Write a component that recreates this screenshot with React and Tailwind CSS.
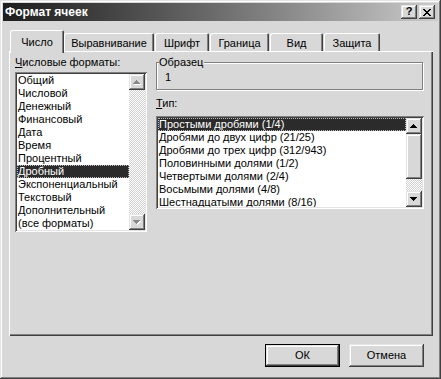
import React from "react";

const BG = "bg-[#d8d8d8]";
const raised =
  "shadow-[inset_-1px_-1px_0_#404040,inset_1px_1px_0_#e4e4e4,inset_-2px_-2px_0_#808080,inset_2px_2px_0_#ffffff]";
const sunken =
  "shadow-[inset_1px_1px_0_#808080,inset_-1px_-1px_0_#ffffff,inset_2px_2px_0_#404040,inset_-2px_-2px_0_#e4e4e4]";
const hatch =
  "bg-[image:repeating-conic-gradient(#ffffff_0%_25%,#d0d0d0_0%_50%)] bg-[length:2px_2px]";

function Arrow({ dir, disabled }) {
  const rows = dir === "up" ? [[3, 0, 1], [2, 1, 3], [1, 2, 5], [0, 3, 7]] : [[0, 0, 7], [1, 1, 5], [2, 2, 3], [3, 3, 1]];
  return (
    <svg width="8" height="5" viewBox="0 0 8 5" shapeRendering="crispEdges">
      {disabled &&
        rows.map(([x, y, w], i) => <rect key={"s" + i} x={x + 1} y={y + 1} width={w} height={1} fill="#ffffff" />)}
      {rows.map(([x, y, w], i) => (
        <rect key={i} x={x} y={y} width={w} height={1} fill={disabled ? "#888888" : "#000000"} />
      ))}
    </svg>
  );
}

function ScrollBtn({ dir, disabled }) {
  return (
    <div className={`w-[16px] h-[16px] shrink-0 ${BG} ${raised} flex items-center justify-center`}>
      <Arrow dir={dir} disabled={disabled} />
    </div>
  );
}

function Row({ text, selected, pl }) {
  return (
    <div
      className={`h-[13px] leading-[13px] whitespace-nowrap ${pl} ${
        selected ? "bg-[#2b2b2b] text-white outline-1 outline-dotted outline-[#bbbbbb] -outline-offset-1" : ""
      }`}
    >
      {text}
    </div>
  );
}

const formats = [
  "Общий",
  "Числовой",
  "Денежный",
  "Финансовый",
  "Дата",
  "Время",
  "Процентный",
  "Дробный",
  "Экспоненциальный",
  "Текстовый",
  "Дополнительный",
  "(все форматы)",
];

const types = [
  "Простыми дробями (1/4)",
  "Дробями до двух цифр (21/25)",
  "Дробями до трех цифр (312/943)",
  "Половинными долями (1/2)",
  "Четвертыми долями (2/4)",
  "Восьмыми долями (4/8)",
  "Шестнадцатыми долями (8/16)",
];

const tabBase =
  "h-[18px] leading-[13px] pt-[4px] text-center rounded-t-[2px] shadow-[inset_1px_1px_0_#ffffff,inset_-1px_0_0_#404040,inset_-2px_0_0_#808080]";

export default function App() {
  return (
    <div
      className={`w-[441px] h-[379px] ${BG} p-[3px] flex flex-col text-[11px] text-black font-['Liberation_Sans',Arial,sans-serif] shadow-[inset_-1px_-1px_0_#404040,inset_1px_1px_0_#e4e4e4,inset_-2px_-2px_0_#808080,inset_2px_2px_0_#ffffff]`}
    >
      {/* Title bar */}
      <div className="h-[18px] shrink-0 flex items-center justify-between pl-[2px] pr-[3px] bg-linear-to-r from-[#1e1e1e] via-[#6e6e6e] to-[#cccccc]">
        <span className="text-white font-bold text-[12px] leading-[14px]">Формат ячеек</span>
        <div className="flex gap-[2px]">
          <div className={`w-[16px] h-[14px] ${BG} ${raised} flex items-center justify-center text-[11px] font-bold leading-none pb-[1px]`}>
            ?
          </div>
          <div className={`w-[16px] h-[14px] ${BG} ${raised} flex items-center justify-center`}>
            <svg width="8" height="7" viewBox="0 0 8 7" shapeRendering="crispEdges">
              <path d="M0 0h2v1H0zM6 0h2v1H6zM1 1h2v1H1zM5 1h2v1H5zM2 2h4v1H2zM3 3h2v1H3zM2 4h4v1H2zM1 5h2v1H1zM5 5h2v1H5zM0 6h2v1H0zM6 6h2v1H6z" fill="#000" />
            </svg>
          </div>
        </div>
      </div>

      {/* Body */}
      <div className="pl-[6px] pt-[9px] flex flex-col">
        {/* Tabs */}
        <div className="flex items-end h-[21px]">
          <div
            className={`relative z-10 ml-[1px] mb-[-2px] w-[54px] h-[23px] ${BG} leading-[13px] pt-[6px] text-center rounded-t-[2px] shadow-[inset_1px_1px_0_#ffffff,inset_-1px_0_0_#404040,inset_-2px_0_0_#808080]`}
          >
            Число
          </div>
          <div className={`w-[90px] ${tabBase}`}>Выравнивание</div>
          <div className={`ml-[1px] w-[54px] ${tabBase}`}>Шрифт</div>
          <div className={`ml-[1px] w-[59px] ${tabBase}`}>Граница</div>
          <div className={`ml-[1px] w-[53px] ${tabBase}`}>Вид</div>
          <div className={`ml-[1px] w-[56px] ${tabBase}`}>Защита</div>
        </div>

        {/* Panel */}
        <div className="w-[424px] h-[285px] pl-[6px] pt-[5px] flex shadow-[inset_1px_1px_0_#ffffff,inset_-1px_-1px_0_#404040,inset_-2px_-2px_0_#808080]">
          {/* Left column */}
          <div className="w-[132px] flex flex-col">
            <div className="h-[13px] leading-[13px]">
              <u>Ч</u>исловые форматы:
            </div>
            <div className={`mt-[3px] h-[160px] bg-white ${sunken} p-[2px] flex`}>
              <div className="flex-1 overflow-hidden">
                {formats.map((f) => (
                  <Row key={f} text={f} selected={f === "Дробный"} pl="pl-[1px]" />
                ))}
              </div>
              <div className="w-[16px] flex flex-col">
                <ScrollBtn dir="up" disabled />
                <div className={`flex-1 ${hatch}`} />
                <ScrollBtn dir="down" disabled />
              </div>
            </div>
          </div>

          {/* Right column */}
          <div className="ml-[9px] w-[268px] flex flex-col">
            <div className="relative mt-[6px] h-[28px] w-[267px] border border-[#808080] shadow-[inset_1px_1px_0_#ffffff,1px_1px_0_#ffffff]">
              <span className={`absolute -top-[7px] left-[2px] ${BG} leading-[13px] pr-[1px]`}>Образец</span>
              <div className="pl-[8px] pt-[8px] leading-[13px]">1</div>
            </div>
            <div className="mt-[7px] h-[13px] leading-[13px]">
              <u>Т</u>ип:
            </div>
            <div className={`mt-[6px] h-[93px] bg-white ${sunken} p-[2px] flex`}>
              <div className="flex-1 overflow-hidden">
                {types.map((t, i) => (
                  <Row key={t} text={t} selected={i === 0} pl="pl-[1px]" />
                ))}
              </div>
              <div className="w-[16px] flex flex-col">
                <ScrollBtn dir="up" />
                <div className={`h-[45px] shrink-0 ${BG} ${raised}`} />
                <div className={`flex-1 ${hatch}`} />
                <ScrollBtn dir="down" />
              </div>
            </div>
          </div>
        </div>

        {/* Buttons */}
        <div className="w-[424px] mt-[8px] pr-[9px] flex justify-end gap-[9px]">
          <div className="w-[75px] h-[23px] border border-black">
            <div className={`w-full h-full ${BG} ${raised} flex items-center justify-center leading-[13px]`}>ОК</div>
          </div>
          <div className={`w-[75px] h-[23px] ${BG} ${raised} flex items-center justify-center leading-[13px]`}>
            Отмена
          </div>
        </div>
      </div>
    </div>
  );
}
